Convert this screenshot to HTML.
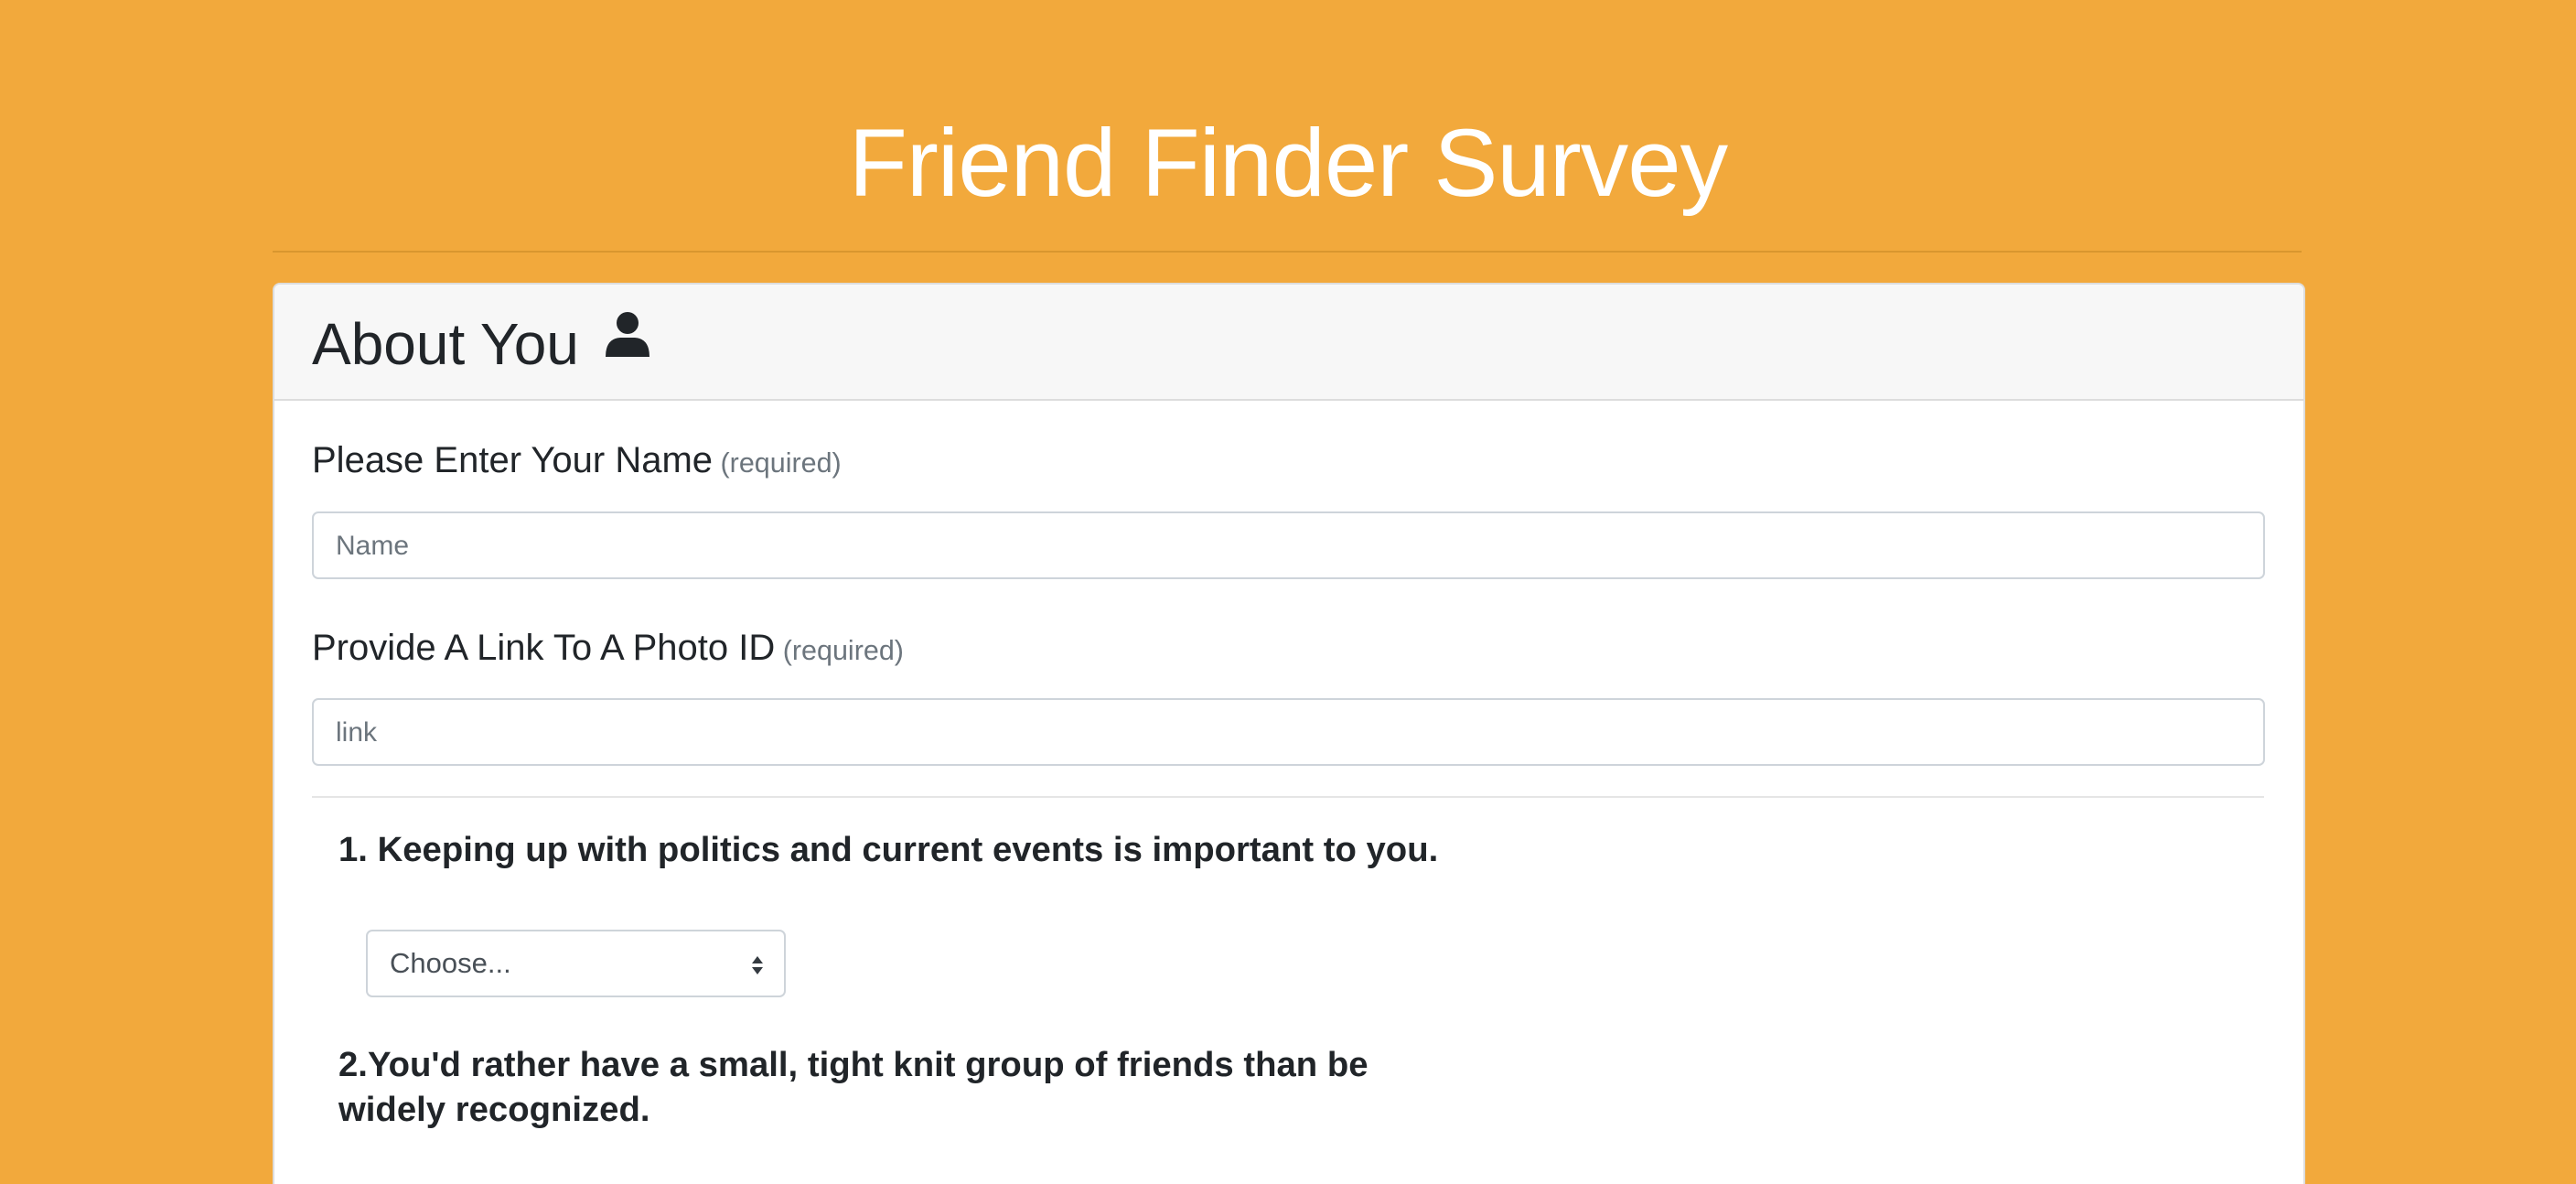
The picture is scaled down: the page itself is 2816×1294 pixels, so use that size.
<!DOCTYPE html>
<html><head><meta charset="utf-8"><style>
html,body{margin:0;padding:0;width:2816px;height:1294px;overflow:hidden}
body{background:#f2a93c;font-family:"Liberation Sans",sans-serif;color:#212529;position:relative}
.abs{position:absolute;white-space:nowrap}
h1{position:absolute;left:0;width:2816px;top:114px;margin:0;text-align:center;font-weight:300;font-size:105px;line-height:130px;color:#fff;letter-spacing:-1px}
.hr1{position:absolute;left:298px;width:2218px;top:274px;height:2px;background:#d9962f}
.card{position:absolute;left:298px;top:309px;width:2218px;height:1000px;background:#fff;border:2px solid #ddd;border-bottom:none;border-radius:8px 8px 0 0;overflow:hidden}
.head{position:absolute;left:0;top:0;right:0;height:125px;background:#f7f7f7;border-bottom:2px solid #dcdcdc}
.lbl{font-size:40px}
.req{font-size:30.5px;color:#6c757d;margin-left:4px}
.inp{position:absolute;left:341px;width:2135px;height:74px;border:2px solid #ced4da;border-radius:7px;background:#fff;box-sizing:border-box}
.ph{position:absolute;left:24px;top:19px;font-size:30px;color:#6c757d}
.q{font-size:38.3px;font-weight:600}
</style></head><body>
<h1>Friend Finder Survey</h1>
<div class="hr1"></div>
<div class="card"><div class="head"></div></div>
<div class="abs" style="left:341px;top:336px;font-size:64px;line-height:80px">About You</div>
<svg class="abs" style="left:660px;top:340px" width="52" height="52" viewBox="0 0 52 52"><circle cx="26" cy="13" r="12" fill="#212529"/><path d="M2 50 Q2 30 18 29 L34 29 Q50 30 50 50 Z" fill="#212529"/></svg>
<div class="abs" style="left:341px;top:478px;line-height:50px"><span class="lbl">Please Enter Your Name</span> <span class="req">(required)</span></div>
<div class="inp" style="top:559px"><span class="ph">Name</span></div>
<div class="abs" style="left:341px;top:683px;line-height:50px"><span class="lbl">Provide A Link To A Photo ID</span> <span class="req">(required)</span></div>
<div class="inp" style="top:763px"><span class="ph">link</span></div>
<div class="abs" style="left:341px;top:870px;width:2134px;height:2px;background:#e5e5e5"></div>
<div class="abs q" style="left:370px;top:904px;line-height:50px">1. Keeping up with politics and current events is important to you.</div>
<div class="abs" style="left:400px;top:1016px;width:459px;height:74px;border:2px solid #ced4da;border-radius:7px;box-sizing:border-box;background:#fff">
<span style="position:absolute;left:24px;top:17px;font-size:31px;color:#495057">Choose...</span>
<svg style="position:absolute;left:418px;top:26px" width="16" height="22" viewBox="0 0 16 22"><path d="M8 1 L14 9 L2 9 Z M8 21 L14 13 L2 13 Z" fill="#343a40"/></svg>
</div>
<div class="abs q" style="left:370px;top:1139px;line-height:49px">2.You'd rather have a small, tight knit group of friends than be<br>widely recognized.</div>
</body></html>
